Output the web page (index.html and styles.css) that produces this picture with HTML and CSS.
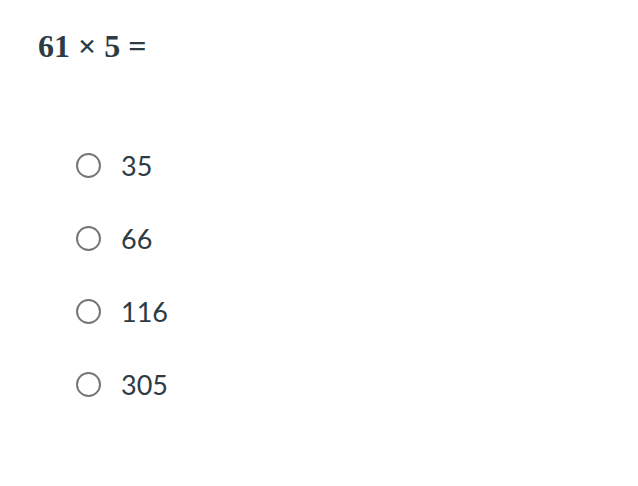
FILE: index.html
```html
<!DOCTYPE html>
<html>
<head>
<meta charset="utf-8">
<link rel="stylesheet" href="styles.css">
</head>
<body>
<div class="quiz">
  <h1 class="question">61 × 5 =</h1>
  <ul class="options">
    <li class="option"><span class="radio"></span><span class="label">35</span></li>
    <li class="option"><span class="radio"></span><span class="label">66</span></li>
    <li class="option"><span class="radio"></span><span class="label">116</span></li>
    <li class="option"><span class="radio"></span><span class="label">305</span></li>
  </ul>
</div>
</body>
</html>
```
FILE: styles.css
```css
html, body {
  margin: 0;
  padding: 0;
  background: #ffffff;
}
.quiz {
  padding: 26px 0 0 38px;
}
.question {
  margin: 0;
  font-family: "Liberation Serif", serif;
  font-weight: bold;
  font-size: 32px;
  line-height: 40px;
  color: #2d3b45;
}
.options {
  list-style: none;
  margin: 0;
  padding: 87px 0 0 38px;
  display: flex;
  flex-direction: column;
  gap: 48px;
}
.option {
  display: flex;
  align-items: center;
  height: 25px;
  gap: 20px;
}
.radio {
  box-sizing: border-box;
  width: 25px;
  height: 25px;
  border: 2px solid #767676;
  border-radius: 50%;
  flex: none;
}
.label {
  font-family: Lato, sans-serif;
  font-size: 27px;
  line-height: 25px;
  color: #2d3b45;
}
```
